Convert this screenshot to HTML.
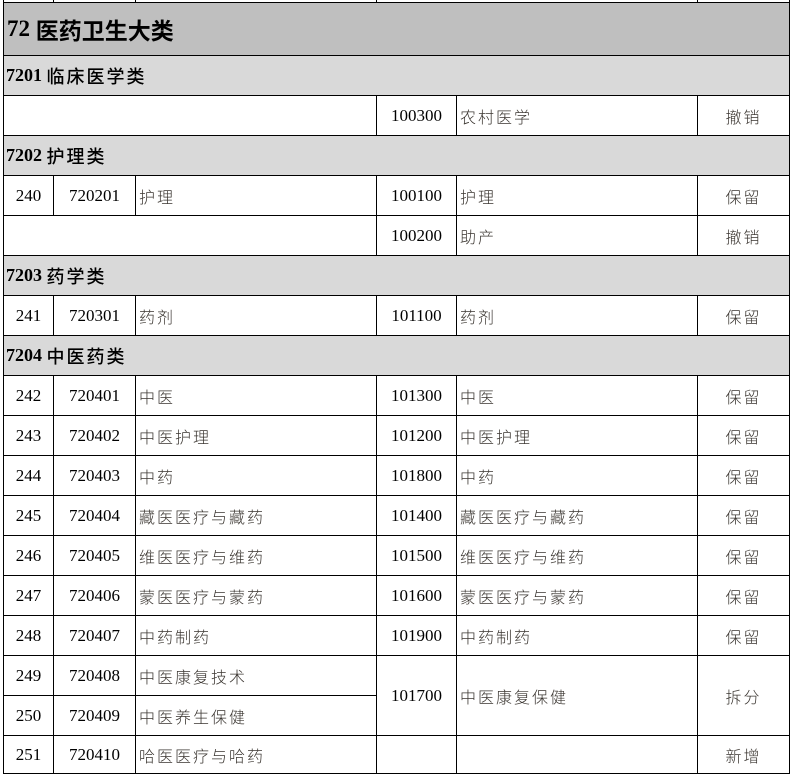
<!DOCTYPE html>
<html><head><meta charset="utf-8"><style>
*{margin:0;padding:0;box-sizing:border-box}
body{width:793px;height:778px;background:#fff;position:relative;overflow:hidden;font-family:"Liberation Serif","Noto Serif CJK SC",serif}
.c{position:absolute;border:1px solid #000;display:flex;align-items:center;font-size:17px;color:#000}
.n{justify-content:center}
.z{font-family:"Liberation Sans","Noto Sans CJK SC",sans-serif;font-size:16px;letter-spacing:2px;color:#3a3530;padding-left:3px;font-weight:300}
.zc{justify-content:center;padding-left:0}
.h1{background:#bfbfbf;font-size:23px;font-weight:bold;padding-left:3px}
.h2{background:#d9d9d9;font-size:18px;font-weight:bold;padding-left:2px}
.h2 span,.h1 span{font-family:"Noto Sans CJK SC",sans-serif;font-weight:bold}
.h2 span{letter-spacing:2px;font-weight:500}
</style></head><body>
<div class="c" style="left:3px;top:-10px;width:51px;height:13px"></div>
<div class="c" style="left:53px;top:-10px;width:83px;height:13px"></div>
<div class="c" style="left:135px;top:-10px;width:242px;height:13px"></div>
<div class="c" style="left:376px;top:-10px;width:322px;height:13px"></div>
<div class="c" style="left:697px;top:-10px;width:93px;height:13px"></div>

<div class="c h1" style="left:3px;top:2px;width:787px;height:54px">72&nbsp;<span>医药卫生大类</span></div>
<div class="c h2" style="left:3px;top:55px;width:787px;height:41px">7201&nbsp;<span>临床医学类</span></div>
<div class="c" style="left:3px;top:95px;width:374px;height:41px"></div>
<div class="c n" style="left:376px;top:95px;width:81px;height:41px">100300</div>
<div class="c z" style="left:456px;top:95px;width:242px;height:41px">农村医学</div>
<div class="c z zc" style="left:697px;top:95px;width:93px;height:41px">撤销</div>
<div class="c h2" style="left:3px;top:135px;width:787px;height:41px">7202&nbsp;<span>护理类</span></div>
<div class="c n" style="left:3px;top:175px;width:51px;height:41px">240</div>
<div class="c n" style="left:53px;top:175px;width:83px;height:41px">720201</div>
<div class="c z" style="left:135px;top:175px;width:242px;height:41px">护理</div>
<div class="c n" style="left:376px;top:175px;width:81px;height:41px">100100</div>
<div class="c z" style="left:456px;top:175px;width:242px;height:41px">护理</div>
<div class="c z zc" style="left:697px;top:175px;width:93px;height:41px">保留</div>
<div class="c" style="left:3px;top:215px;width:374px;height:41px"></div>
<div class="c n" style="left:376px;top:215px;width:81px;height:41px">100200</div>
<div class="c z" style="left:456px;top:215px;width:242px;height:41px">助产</div>
<div class="c z zc" style="left:697px;top:215px;width:93px;height:41px">撤销</div>
<div class="c h2" style="left:3px;top:255px;width:787px;height:41px">7203&nbsp;<span>药学类</span></div>
<div class="c n" style="left:3px;top:295px;width:51px;height:41px">241</div>
<div class="c n" style="left:53px;top:295px;width:83px;height:41px">720301</div>
<div class="c z" style="left:135px;top:295px;width:242px;height:41px">药剂</div>
<div class="c n" style="left:376px;top:295px;width:81px;height:41px">101100</div>
<div class="c z" style="left:456px;top:295px;width:242px;height:41px">药剂</div>
<div class="c z zc" style="left:697px;top:295px;width:93px;height:41px">保留</div>
<div class="c h2" style="left:3px;top:335px;width:787px;height:41px">7204&nbsp;<span>中医药类</span></div>

<div class="c n" style="left:3px;top:375px;width:51px;height:41px">242</div><div class="c n" style="left:53px;top:375px;width:83px;height:41px">720401</div><div class="c z" style="left:135px;top:375px;width:242px;height:41px">中医</div><div class="c n" style="left:376px;top:375px;width:81px;height:41px">101300</div><div class="c z" style="left:456px;top:375px;width:242px;height:41px">中医</div><div class="c z zc" style="left:697px;top:375px;width:93px;height:41px">保留</div>
<div class="c n" style="left:3px;top:415px;width:51px;height:41px">243</div><div class="c n" style="left:53px;top:415px;width:83px;height:41px">720402</div><div class="c z" style="left:135px;top:415px;width:242px;height:41px">中医护理</div><div class="c n" style="left:376px;top:415px;width:81px;height:41px">101200</div><div class="c z" style="left:456px;top:415px;width:242px;height:41px">中医护理</div><div class="c z zc" style="left:697px;top:415px;width:93px;height:41px">保留</div>
<div class="c n" style="left:3px;top:455px;width:51px;height:41px">244</div><div class="c n" style="left:53px;top:455px;width:83px;height:41px">720403</div><div class="c z" style="left:135px;top:455px;width:242px;height:41px">中药</div><div class="c n" style="left:376px;top:455px;width:81px;height:41px">101800</div><div class="c z" style="left:456px;top:455px;width:242px;height:41px">中药</div><div class="c z zc" style="left:697px;top:455px;width:93px;height:41px">保留</div>
<div class="c n" style="left:3px;top:495px;width:51px;height:41px">245</div><div class="c n" style="left:53px;top:495px;width:83px;height:41px">720404</div><div class="c z" style="left:135px;top:495px;width:242px;height:41px">藏医医疗与藏药</div><div class="c n" style="left:376px;top:495px;width:81px;height:41px">101400</div><div class="c z" style="left:456px;top:495px;width:242px;height:41px">藏医医疗与藏药</div><div class="c z zc" style="left:697px;top:495px;width:93px;height:41px">保留</div>
<div class="c n" style="left:3px;top:535px;width:51px;height:41px">246</div><div class="c n" style="left:53px;top:535px;width:83px;height:41px">720405</div><div class="c z" style="left:135px;top:535px;width:242px;height:41px">维医医疗与维药</div><div class="c n" style="left:376px;top:535px;width:81px;height:41px">101500</div><div class="c z" style="left:456px;top:535px;width:242px;height:41px">维医医疗与维药</div><div class="c z zc" style="left:697px;top:535px;width:93px;height:41px">保留</div>
<div class="c n" style="left:3px;top:575px;width:51px;height:41px">247</div><div class="c n" style="left:53px;top:575px;width:83px;height:41px">720406</div><div class="c z" style="left:135px;top:575px;width:242px;height:41px">蒙医医疗与蒙药</div><div class="c n" style="left:376px;top:575px;width:81px;height:41px">101600</div><div class="c z" style="left:456px;top:575px;width:242px;height:41px">蒙医医疗与蒙药</div><div class="c z zc" style="left:697px;top:575px;width:93px;height:41px">保留</div>
<div class="c n" style="left:3px;top:615px;width:51px;height:41px">248</div><div class="c n" style="left:53px;top:615px;width:83px;height:41px">720407</div><div class="c z" style="left:135px;top:615px;width:242px;height:41px">中药制药</div><div class="c n" style="left:376px;top:615px;width:81px;height:41px">101900</div><div class="c z" style="left:456px;top:615px;width:242px;height:41px">中药制药</div><div class="c z zc" style="left:697px;top:615px;width:93px;height:41px">保留</div>
<div class="c n" style="left:3px;top:655px;width:51px;height:41px">249</div><div class="c n" style="left:53px;top:655px;width:83px;height:41px">720408</div><div class="c z" style="left:135px;top:655px;width:242px;height:41px">中医康复技术</div>
<div class="c n" style="left:3px;top:695px;width:51px;height:41px">250</div><div class="c n" style="left:53px;top:695px;width:83px;height:41px">720409</div><div class="c z" style="left:135px;top:695px;width:242px;height:41px">中医养生保健</div>
<div class="c n" style="left:376px;top:655px;width:81px;height:81px">101700</div><div class="c z" style="left:456px;top:655px;width:242px;height:81px">中医康复保健</div><div class="c z zc" style="left:697px;top:655px;width:93px;height:81px">拆分</div>
<div class="c n" style="left:3px;top:735px;width:51px;height:39px">251</div><div class="c n" style="left:53px;top:735px;width:83px;height:39px">720410</div><div class="c z" style="left:135px;top:735px;width:242px;height:39px">哈医医疗与哈药</div><div class="c n" style="left:376px;top:735px;width:81px;height:39px"></div><div class="c z" style="left:456px;top:735px;width:242px;height:39px"></div><div class="c z zc" style="left:697px;top:735px;width:93px;height:39px">新增</div>
</body></html>
